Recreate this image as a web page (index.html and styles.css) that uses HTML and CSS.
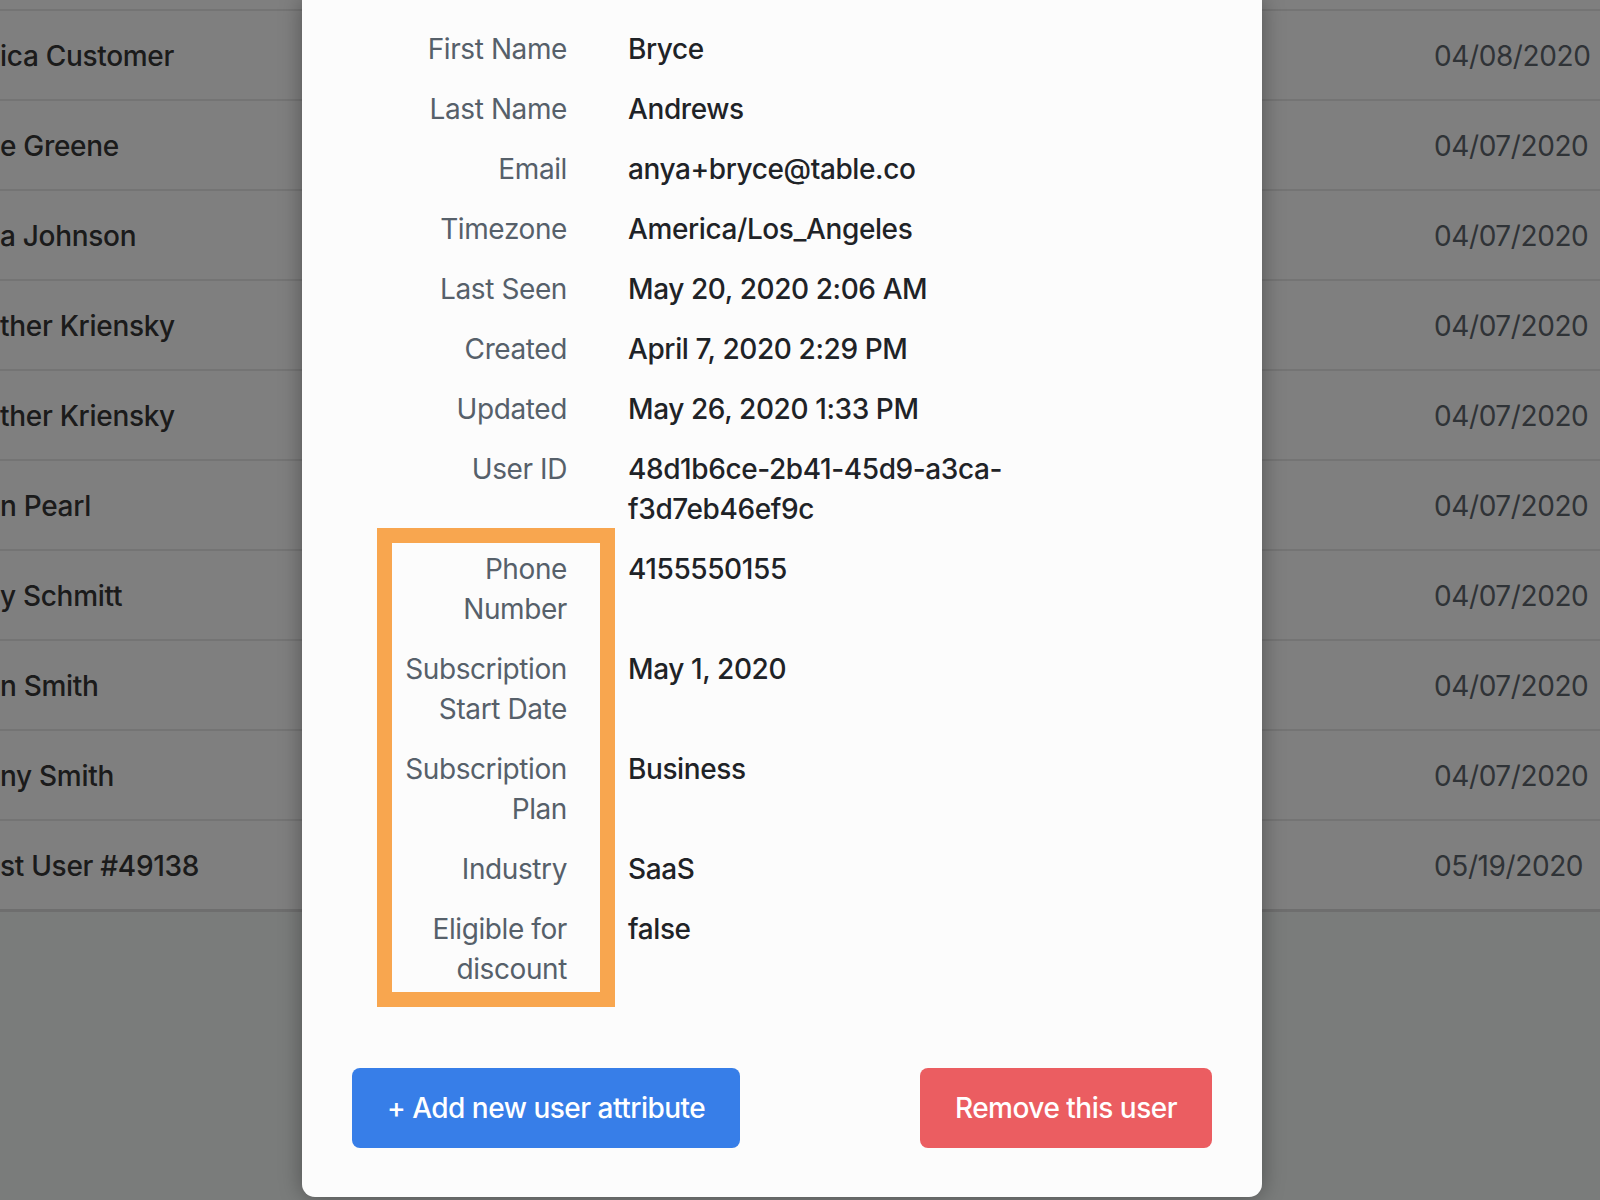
FILE: index.html
```html
<!DOCTYPE html>
<html lang="en">
<head>
<meta charset="utf-8">
<title>User details</title>
<link rel="stylesheet" href="styles.css">
</head>
<body>
<div class="page">
  <div class="table">
    <div class="row"><span class="name">ica Customer</span><span class="date">04/08/2020</span></div>
    <div class="row"><span class="name">e Greene</span><span class="date">04/07/2020</span></div>
    <div class="row"><span class="name">a Johnson</span><span class="date">04/07/2020</span></div>
    <div class="row"><span class="name">ther Kriensky</span><span class="date">04/07/2020</span></div>
    <div class="row"><span class="name">ther Kriensky</span><span class="date">04/07/2020</span></div>
    <div class="row"><span class="name">n Pearl</span><span class="date">04/07/2020</span></div>
    <div class="row"><span class="name">y Schmitt</span><span class="date">04/07/2020</span></div>
    <div class="row"><span class="name">n Smith</span><span class="date">04/07/2020</span></div>
    <div class="row"><span class="name">ny Smith</span><span class="date">04/07/2020</span></div>
    <div class="row last"><span class="name">st User #49138</span><span class="date">05/19/2020</span></div>
  </div>
</div>

<div class="overlay">
  <div class="modal">
    <div class="details">
      <div class="label">First Name</div><div class="value">Bryce</div>
      <div class="label">Last Name</div><div class="value">Andrews</div>
      <div class="label">Email</div><div class="value">anya+bryce@table.co</div>
      <div class="label">Timezone</div><div class="value">America/Los_Angeles</div>
      <div class="label">Last Seen</div><div class="value">May 20, 2020 2:06 AM</div>
      <div class="label">Created</div><div class="value">April 7, 2020 2:29 PM</div>
      <div class="label">Updated</div><div class="value">May 26, 2020 1:33 PM</div>
      <div class="label">User ID</div><div class="value">48d1b6ce-2b41-45d9-a3ca-f3d7eb46ef9c</div>
      <div class="label">Phone Number</div><div class="value">4155550155</div>
      <div class="label">Subscription Start Date</div><div class="value">May 1, 2020</div>
      <div class="label">Subscription Plan</div><div class="value">Business</div>
      <div class="label">Industry</div><div class="value">SaaS</div>
      <div class="label">Eligible for discount</div><div class="value">false</div>
      <div class="highlight"></div>
    </div>
    <div class="actions">
      <button class="btn btn-primary">+ Add new user attribute</button>
      <button class="btn btn-danger">Remove this user</button>
    </div>
  </div>
</div>
</body>
</html>
```

FILE: styles.css
```css
html, body {
  margin: 0;
  padding: 0;
  width: 1600px;
  height: 1200px;
  overflow: hidden;
}

body {
  font-family: Inter, "Noto Sans", "Liberation Sans", sans-serif;
  background: #f5f9f7;
  position: relative;
  letter-spacing: -0.4px;
}

.page {
  width: 1600px;
  height: 1200px;
}

.table {
  background: #ffffff;
  padding-top: 9px;
  border-bottom: 3px solid #dcdcdc;
}

.row {
  display: flex;
  align-items: center;
  height: 88px;
  padding-top: 1px;
  box-sizing: content-box;
  height: 87px;
  border-top: 2px solid #e9e9e9;
}

.name {
  width: 1434px;
  font-size: 28px;
  font-weight: 500;
  color: #363636;
  letter-spacing: -0.3px;
}

.date {
  font-size: 28px;
  color: #5f676e;
  letter-spacing: -0.4px;
}

.overlay {
  position: absolute;
  inset: 0;
  background: rgba(0, 0, 0, 0.5);
}

.modal {
  position: absolute;
  left: 302px;
  top: 0;
  width: 960px;
  height: 1197px;
  box-sizing: border-box;
  background: #fcfcfc;
  border-radius: 0 0 13px 13px;
  box-shadow: 0 0 22px rgba(0, 0, 0, 0.35);
  padding: 29px 50px 0 50px;
  display: flex;
  flex-direction: column;
}

.details {
  position: relative;
  display: grid;
  grid-template-columns: 175px 460px;
  column-gap: 61px;
  row-gap: 20px;
  margin-left: 40px;
  font-size: 28px;
  line-height: 40px;
}

.label {
  text-align: right;
  color: #56606a;
}

.value {
  color: #1f2327;
  font-weight: 500;
}

.highlight {
  position: absolute;
  left: -15px;
  top: 499px;
  width: 238px;
  height: 479px;
  box-sizing: border-box;
  border: 15px solid #f8a64f;
  pointer-events: none;
}

.actions {
  display: flex;
  justify-content: space-between;
  margin-top: 79px;
}

.btn {
  height: 80px;
  padding: 0 35px;
  border: none;
  border-radius: 8px;
  font-family: inherit;
  font-size: 28px;
  font-weight: 500;
  letter-spacing: -0.5px;
  color: #ffffff;
}

.btn-primary {
  background: #377ee8;
}

.btn-danger {
  background: #eb5d61;
}
```
